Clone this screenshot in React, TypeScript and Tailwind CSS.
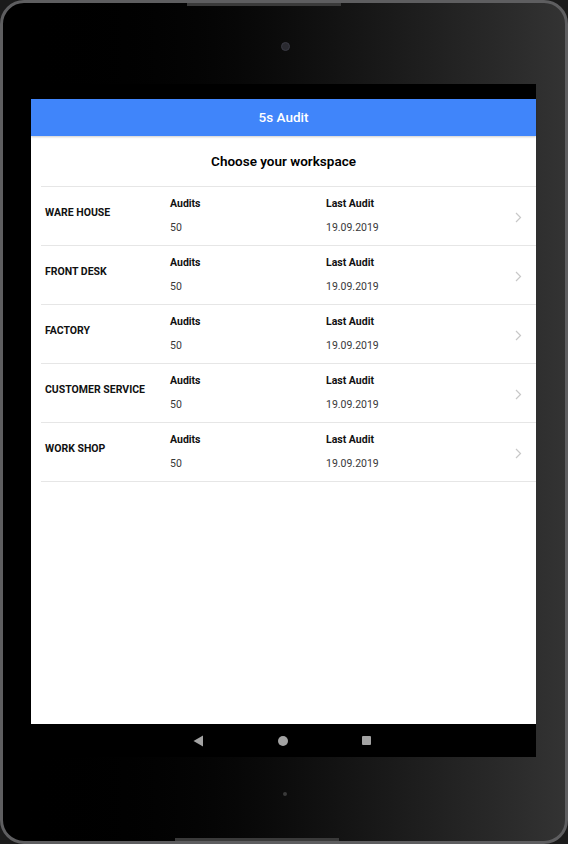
import { useState } from "react";

type Workspace = {
  name: string;
  audits: number;
  lastAudit: string;
};

const workspaces: Workspace[] = [
  { name: "WARE HOUSE", audits: 50, lastAudit: "19.09.2019" },
  { name: "FRONT DESK", audits: 50, lastAudit: "19.09.2019" },
  { name: "FACTORY", audits: 50, lastAudit: "19.09.2019" },
  { name: "CUSTOMER SERVICE", audits: 50, lastAudit: "19.09.2019" },
  { name: "WORK SHOP", audits: 50, lastAudit: "19.09.2019" },
];

function Chevron() {
  return (
    <svg width="7" height="11" viewBox="0 0 7 11" fill="none">
      <path d="M1 1l4.5 4.5L1 10" stroke="#c8c8c8" strokeWidth="1.2" />
    </svg>
  );
}

export default function App() {
  const [selected, setSelected] = useState<string | null>(null);

  return (
    <div className="w-[568px] h-[844px] bg-[#1b1b1b] font-['Roboto',sans-serif]">
      <div className="relative w-[568px] h-[844px] rounded-[24px] border-[3px] border-[#5e5e60] bg-gradient-to-r from-black via-[#0c0c0c] to-[#333333] flex flex-col overflow-hidden">
        {/* speaker grills */}
        <div className="absolute left-[184px] top-0 w-[154px] h-[3px] bg-[#3a3a3a]" />
        <div className="absolute left-[172px] bottom-0 w-[164px] h-[3px] bg-[#3a3a3a]" />

        {/* top bezel */}
        <div className="h-[81px] flex items-start justify-center pt-[39px] pl-[2px]">
          <div className="w-[9px] h-[9px] rounded-full bg-[#2a2a30] border border-[#3a3a44]" />
        </div>

        {/* screen */}
        <div className="ml-[28px] w-[505px] h-[673px] flex flex-col bg-white">
          <div className="h-[15px] bg-black" />
          <div className="h-[37px] bg-[#4085fa] flex items-center justify-center text-white text-[13.5px] font-medium shadow-[0_1px_2px_rgba(0,0,0,0.2)]">
            5s Audit
          </div>

          <div className="flex-1 flex flex-col">
            <div className="h-[50px] flex items-center justify-center text-[13.5px] font-semibold text-black">
              Choose your workspace
            </div>

            <div className="ml-[10px] border-b border-[#e6e6e6]">
              {workspaces.map((w) => (
                <div
                  key={w.name}
                  onClick={() => setSelected(w.name)}
                  className={`h-[59px] border-t border-[#e6e6e6] flex items-center cursor-pointer ${
                    selected === w.name ? "bg-gray-50" : ""
                  }`}
                >
                  <div className="w-[129px] pl-[4px] pb-[6px] text-[10.5px] font-bold text-[#111]">
                    {w.name}
                  </div>
                  <div className="w-[156px] flex flex-col gap-[14px]">
                    <span className="text-[10.5px] font-bold text-[#111] leading-none">Audits</span>
                    <span className="text-[10.5px] text-[#383838] leading-none">{w.audits}</span>
                  </div>
                  <div className="flex-1 flex flex-col gap-[14px]">
                    <span className="text-[10.5px] font-bold text-[#111] leading-none">Last Audit</span>
                    <span className="text-[10.5px] text-[#383838] leading-none">{w.lastAudit}</span>
                  </div>
                  <div className="pr-[14px] pt-[2px]">
                    <Chevron />
                  </div>
                </div>
              ))}
            </div>
          </div>

          {/* nav bar */}
          <div className="h-[33px] bg-black flex items-center justify-center gap-[74px] pr-[4px]">
            <svg width="11" height="12" viewBox="0 0 11 12">
              <path d="M10 0.5v11L0.5 6z" fill="#a3a3a3" />
            </svg>
            <div className="w-[10px] h-[10px] rounded-full bg-[#a3a3a3]" />
            <div className="w-[9px] h-[9px] rounded-[1px] bg-[#a3a3a3]" />
          </div>
        </div>

        {/* bottom bezel */}
        <div className="flex-1 flex items-start justify-center pt-[35px] pl-[2px]">
          <div className="w-[4px] h-[4px] rounded-full bg-[#3a3a3a]" />
        </div>
      </div>
    </div>
  );
}
